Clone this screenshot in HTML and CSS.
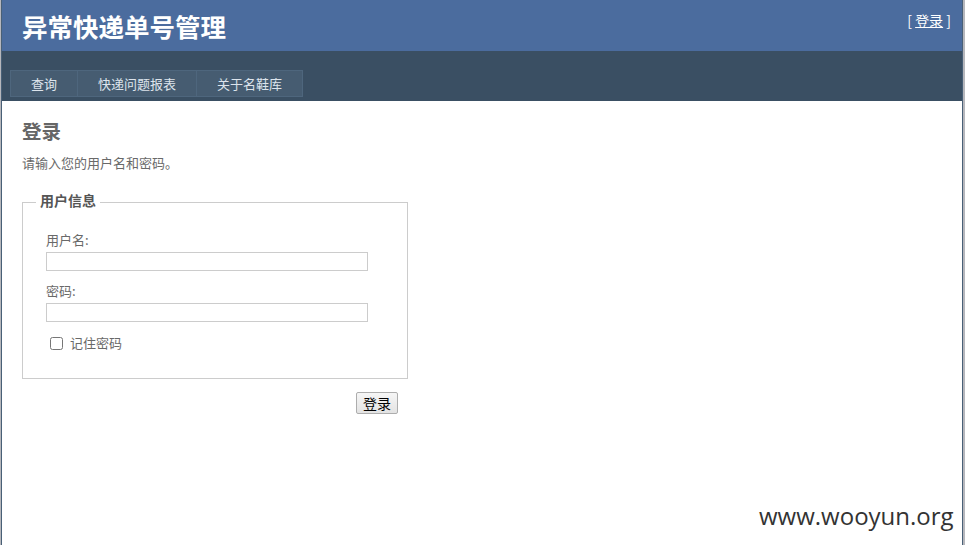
FILE: index.html
```html
<!DOCTYPE html>
<html lang="zh-CN">
<head>
<meta charset="utf-8">
<title>异常快递单号管理</title>
<link rel="stylesheet" href="styles.css">
</head>
<body>
<div class="page">
  <div class="header">
    <h1 class="title">异常快递单号管理</h1>
    <div class="login-display">[ <a href="#" class="login-link">登录</a> ]</div>
  </div>
  <div class="nav">
    <ul class="menu">
      <li class="menu-item">查询</li>
      <li class="menu-item">快递问题报表</li>
      <li class="menu-item">关于名鞋库</li>
    </ul>
  </div>
  <div class="main">
    <h2 class="heading">登录</h2>
    <p class="intro">请输入您的用户名和密码。</p>
    <fieldset class="login-box">
      <legend class="legend">用户信息</legend>
      <div class="field-label">用户名:</div>
      <input class="text-input" type="text">
      <div class="field-label second">密码:</div>
      <input class="text-input" type="password">
      <div class="remember"><input class="check" type="checkbox"> <span>记住密码</span></div>
    </fieldset>
    <div class="submit-row"><button class="submit-btn" type="button">登录</button></div>
  </div>
</div>
<div class="watermark">www.wooyun.org</div>
</body>
</html>
```
FILE: styles.css
```css
html, body {
  margin: 0;
  padding: 0;
}
body {
  background: #b6b7bc;
  font-family: "Liberation Sans", "Noto Sans CJK SC", sans-serif;
  color: #696969;
  font-size: 13px;
}
.page {
  width: 960px;
  margin: 0 0 0 1px;
  background: #fff;
  border-left: 1px solid #496077;
  border-right: 1px solid #496077;
  min-height: 545px;
}
.header {
  height: 51px;
  background: #4b6c9e;
  display: flex;
  justify-content: space-between;
  align-items: flex-start;
}
.title {
  margin: 0;
  padding-left: 20px;
  font-size: 25.5px;
  line-height: 51px;
  font-weight: bold;
  color: #fff;
  font-family: "Noto Sans CJK SC", sans-serif;
}
.login-display {
  color: #fff;
  font-size: 14px;
  line-height: 18px;
  padding: 11px 11px 0 0;
  font-family: "Noto Sans CJK SC", sans-serif;
}
.login-link {
  color: #fff;
  text-decoration: underline;
}
.nav {
  height: 50px;
  background: #3a4f63;
  box-sizing: border-box;
  padding: 19px 0 0 8px;
}
.menu {
  list-style: none;
  margin: 0;
  padding: 0;
  display: flex;
}
.menu-item {
  background: #465c71;
  border: 1px solid #4e667d;
  margin-left: -1px;
  padding: 0 20px;
  height: 27px;
  box-sizing: border-box;
  line-height: 25px;
  font-size: 13px;
  color: #dde4ec;
  font-family: "Noto Sans CJK SC", sans-serif;
}
.menu-item:first-child {
  margin-left: 0;
}
.main {
  padding: 10px 0 0 20px;
  font-family: "Noto Sans CJK SC", sans-serif;
}
.heading {
  margin: 8px 0 0;
  font-size: 19.5px;
  line-height: 24px;
  color: #666;
  font-weight: bold;
}
.intro {
  margin: 11px 0 0;
  font-size: 13px;
  line-height: 18px;
}
.login-box {
  margin: 19px 0 0;
  width: 386px;
  box-sizing: border-box;
  border: 1px solid #ccc;
  padding: 18px 0 26px 23px;
  min-width: 0;
}
.legend {
  padding: 0 4px 4px;
  margin-left: -10px;
  font-size: 14px;
  line-height: 18px;
  font-weight: bold;
  color: #555;
}
.field-label {
  font-size: 13px;
  line-height: 18px;
}
.field-label.second {
  margin-top: 11px;
}
.text-input {
  display: block;
  margin: 3px 0 0;
  width: 322px;
  height: 19px;
  box-sizing: border-box;
  border: 1px solid #ccc;
  padding: 0 2px;
  font-size: 13px;
}
.remember {
  margin-top: 12px;
  line-height: 18px;
  display: flex;
  align-items: center;
  font-size: 13px;
}
.check {
  margin: 0 4px 0 4px;
  width: 13px;
  height: 13px;
}
.remember span {
  margin-left: 3px;
}
.submit-row {
  width: 386px;
  box-sizing: border-box;
  text-align: right;
  padding-right: 10px;
  margin-top: 13px;
}
.submit-btn {
  width: 42px;
  height: 22px;
  padding: 0;
  border: 1px solid #adadad;
  border-radius: 2px;
  background: linear-gradient(#f6f6f6, #e3e3e3);
  color: #000;
  font-size: 14px;
  font-family: "Noto Sans CJK SC", sans-serif;
  line-height: 20px;
}
.watermark {
  position: absolute;
  left: 759px;
  top: 499px;
  font-family: "Open Sans", "Noto Sans", sans-serif;
  font-size: 24px;
  color: #333;
}
```
